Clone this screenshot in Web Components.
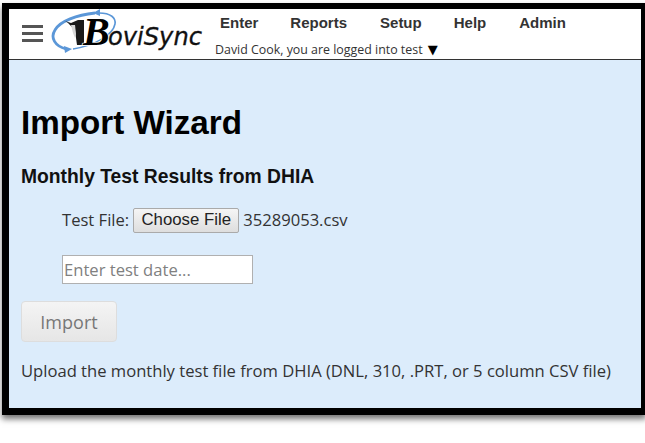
<!DOCTYPE html>
<html><head><meta charset="utf-8"><style>
html,body{margin:0;padding:0;background:#fff}
body{width:645px;height:443px;overflow:hidden}
</style></head><body>
<app-frame>
<app-header slot="header"></app-header>
<import-wizard></import-wizard>
</app-frame>
<script>
class AppFrame extends HTMLElement{constructor(){super();this.attachShadow({mode:'open'}).innerHTML=`<style>
:host{box-sizing:border-box;width:644px;height:412px;margin:3px 0 0 2px;border:solid #000;border-width:6px 5px 7px 7px;background:#dcecfb;box-shadow:0 4px 6px rgba(0,0,0,.55);display:flex;flex-direction:column}
</style><slot name="header"></slot><slot></slot>`}}
class AppHeader extends HTMLElement{constructor(){super();this.attachShadow({mode:'open'}).innerHTML=`<style>
:host{display:flex;box-sizing:border-box;height:51px;background:#fff;border-bottom:1px solid #333;flex:none}
.burger{margin:16px 0 0 13px;width:21px;height:17px;display:flex;flex-direction:column;justify-content:space-between;flex:none}
.burger i{display:block;height:3px;background:#555}
svg{display:block;margin:0 0 0 6px;flex:none}
.right{margin-left:6px;display:flex;flex-direction:column}
nav{display:flex;font:bold 15px "Liberation Sans",Arial,sans-serif;color:#333;margin-top:5px;line-height:17px;margin-left:5px}
nav span{margin-right:32px}
nav span:nth-child(2){margin-right:33px}
nav span:nth-child(4){margin-right:33px}
.user{font:12.4px "Open Sans",sans-serif;color:#333;margin-top:11px;line-height:15px;white-space:nowrap}
.user b{font:13px "DejaVu Sans",sans-serif;color:#000;margin-left:2px}
</style><div class="burger"><i></i><i></i><i></i></div>
<svg width="160" height="50" viewBox="0 -2 160 50">
<g fill="none" stroke="#5b97d8">
<path d="M17 38C6 35 1 27 6 19C11 10 28 4 46 2" stroke-width="2.8"/>
<path d="M50 2C62 2 67 7 66 13C64 24 47 34 24 38" stroke-width="1.6"/>
</g>
<path d="M44 2l7-4v7z" fill="#5b97d8"/><path d="M23 38l-8-3 1 7z" fill="#5b97d8"/>
<path d="M16 10l6 2 7-3 6 0 0 25-7 0-1-7-1-8-4-4-3-3z" fill="#1a1a1a"/>
<path d="M22 14l4 0 1 9-1 4-2-5z" fill="#d8d8d8"/>
<text x="34" y="34" font-family="Liberation Serif,serif" font-style="italic" font-weight="bold" font-size="40" fill="#000" stroke="#fff" stroke-width="1.5" paint-order="stroke">B</text>
<text x="59" y="34" font-family="DejaVu Sans,sans-serif" font-style="italic" font-size="24" fill="#111" stroke="#111" stroke-width=".3" textLength="94" lengthAdjust="spacingAndGlyphs">oviSync</text>
</svg>
<div class="right"><nav><span>Enter</span><span>Reports</span><span>Setup</span><span>Help</span><span>Admin</span></nav>
<div class="user">David Cook, you are logged into test <b>▼</b></div></div>`}}
class ImportWizard extends HTMLElement{constructor(){super();this.attachShadow({mode:'open'}).innerHTML=`<style>
:host{display:block;font:16.6px "Open Sans",sans-serif;color:#333;padding:0 12px}
h1{font:bold 33.2px "Liberation Sans",Arial,sans-serif;color:#000;margin:43px 0 0;line-height:40px}
h2{font:bold 19.3px "Liberation Sans",Arial,sans-serif;color:#111;margin:22px 0 0;line-height:24px}
.file{display:flex;align-items:center;margin:18px 0 0 41px;height:26px;gap:4px}
.file span{padding-bottom:2px}
.file button{font:16.8px "Liberation Sans",Arial,sans-serif;color:#222;height:25px;width:106px;padding:0;border:1px solid #aaa;border-radius:2px;background:linear-gradient(#f5f5f5,#dedede)}
.date{box-sizing:border-box;display:block;margin:22px 0 0 41px;width:191px;height:29px;border:1px solid #b0b0b0;background:#fff;padding:0 0 0 1px;font:16.6px "Open Sans",sans-serif;color:#333;outline:none}
.date::placeholder{color:#808080;opacity:1}
.imp{display:block;margin:17px 0 0;width:96px;height:41px;border:1px solid #ddd;border-radius:4px;background:linear-gradient(#f4f4f4,#e6e6e6);color:#777;font:18px "Open Sans",sans-serif;padding:0}
p{margin:18px 0 0;line-height:22px;white-space:nowrap}
</style><h1>Import Wizard</h1><h2>Monthly Test Results from DHIA</h2>
<div class="file"><span>Test File:</span><button>Choose File</button><span>35289053.csv</span></div>
<input class="date" placeholder="Enter test date...">
<button class="imp">Import</button>
<p>Upload the monthly test file from DHIA (DNL, 310, .PRT, or 5 column CSV file)</p>`}}
customElements.define('app-frame',AppFrame);
customElements.define('app-header',AppHeader);
customElements.define('import-wizard',ImportWizard);
</script></body></html>
